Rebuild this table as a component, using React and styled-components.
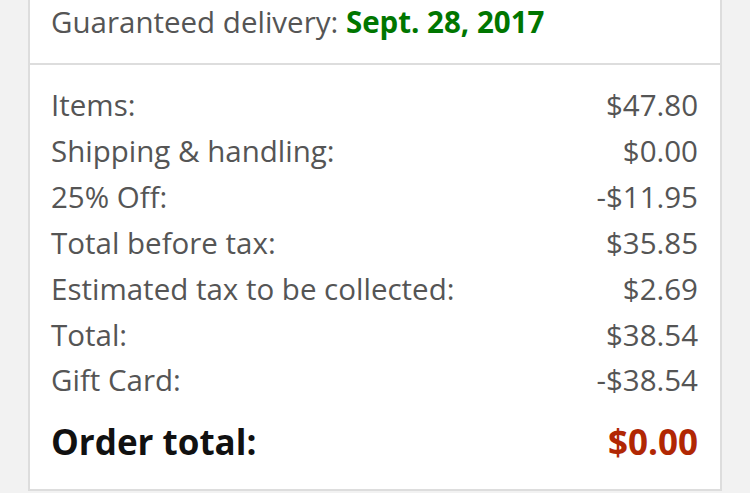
import React from "react";
import styled, { createGlobalStyle } from "styled-components";

const Global = createGlobalStyle`
  html, body { margin: 0; padding: 0; background: #f2f2f2; }
  body { font-family: "Open Sans", "Liberation Sans", sans-serif; overflow: hidden; }
`;

const Page = styled.div`
  padding: 0 28px;
  margin-top: -43px;
`;

const Card = styled.div`
  background: #fff;
  border: 2px solid #dddddd;
  border-top: none;
`;

const Section = styled.div`
  padding: ${(p) => p.$pad};
  border-bottom: ${(p) => (p.$divider ? "2px solid #dddddd" : "none")};
`;

const Line = styled.div`
  font-size: 29.5px;
  line-height: ${(p) => p.$lh || "46px"};
  color: #555555;
  white-space: nowrap;
`;

const Strong = styled.span`
  font-weight: 700;
  color: ${(p) => p.$color};
`;

const Row = styled.div`
  display: flex;
  justify-content: space-between;
  align-items: baseline;
  font-size: ${(p) => (p.$big ? "35px" : "29.5px")};
  line-height: ${(p) => (p.$big ? "46px" : "45.9px")};
  font-weight: ${(p) => (p.$big ? 700 : 400)};
  color: ${(p) => (p.$big ? "#111111" : "#555555")};
  margin-top: ${(p) => (p.$big ? "16px" : "0")};
`;

const Amount = styled.span`
  color: ${(p) => p.$color || "inherit"};
`;

const rows = [
  ["Items:", "$47.80"],
  ["Shipping & handling:", "$0.00"],
  ["25% Off:", "-$11.95"],
  ["Total before tax:", "$35.85"],
  ["Estimated tax to be collected:", "$2.69"],
  ["Total:", "$38.54"],
  ["Gift Card:", "-$38.54"],
];

export default function App() {
  return (
    <>
      <Global />
      <Page>
        <Card>
          <Section $pad="0 22px 18px 21px" $divider>
            <Line $lh="42px">Shipping speed: FREE Shipping</Line>
            <Line>
              Guaranteed delivery: <Strong $color="#007600">Sept. 28, 2017</Strong>
            </Line>
          </Section>
          <Section $pad="17px 22px 24px 21px">
            {rows.map(([label, value]) => (
              <Row key={label}>
                <span>{label}</span>
                <Amount>{value}</Amount>
              </Row>
            ))}
            <Row $big>
              <span>Order total:</span>
              <Amount $color="#B12704">$0.00</Amount>
            </Row>
          </Section>
        </Card>
      </Page>
    </>
  );
}
